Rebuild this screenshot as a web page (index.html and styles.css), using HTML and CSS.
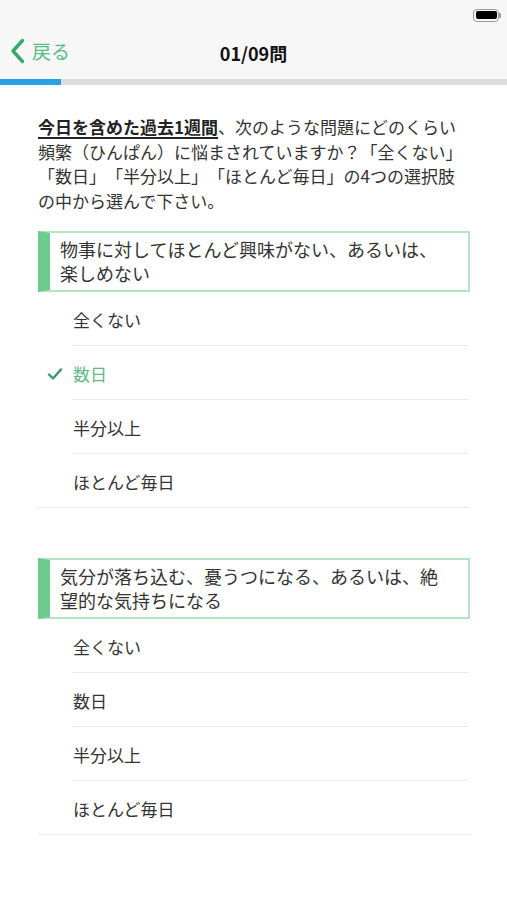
FILE: index.html
```html
<!DOCTYPE html>
<html lang="ja">
<head>
<meta charset="utf-8">
<title>01/09問</title>
<link rel="stylesheet" href="styles.css">
</head>
<body>
<div class="statusbar">
  <div class="battery"><div class="battery-level"></div></div>
  <div class="battery-nub"></div>
</div>
<header class="navbar">
  <a class="back">
    <svg class="chev" width="15" height="26" viewBox="0 0 15 26"><polyline points="12.5,2.5 3,13 12.5,23.5" fill="none" stroke="#3aa86b" stroke-width="3.4" stroke-linecap="round" stroke-linejoin="round"/></svg>
    <span>戻る</span>
  </a>
  <h1 class="title">01/09問</h1>
</header>
<div class="progress"><div class="progress-fill" style="width:61px"></div></div>

<main class="content">
  <p class="intro"><span class="em">今日を含めた過去1週間</span>、次のような問題にどのくらい頻繁（ひんぱん）に悩まされていますか？「全くない」「数日」「半分以上」「ほとんど毎日」の4つの選択肢の中から選んで下さい。</p>

  <section class="question">
    <div class="qbox"><p>物事に対してほとんど興味がない、あるいは、楽しめない</p></div>
    <ul class="options">
      <li class="opt"><span class="label">全くない</span></li>
      <li class="opt selected"><svg class="check" width="16" height="14" viewBox="0 0 16 14"><polyline points="2,7.5 6,11.5 14,2.5" fill="none" stroke="#3a9a66" stroke-width="2.4" stroke-linecap="round" stroke-linejoin="round"/></svg><span class="label">数日</span></li>
      <li class="opt"><span class="label">半分以上</span></li>
      <li class="opt last"><span class="label">ほとんど毎日</span></li>
    </ul>
  </section>

  <section class="question second">
    <div class="qbox"><p>気分が落ち込む、憂うつになる、あるいは、絶望的な気持ちになる</p></div>
    <ul class="options">
      <li class="opt"><span class="label">全くない</span></li>
      <li class="opt"><span class="label">数日</span></li>
      <li class="opt"><span class="label">半分以上</span></li>
      <li class="opt last"><span class="label">ほとんど毎日</span></li>
    </ul>
  </section>
</main>
</body>
</html>
```

FILE: styles.css
```css
* { box-sizing: border-box; }
html, body { margin: 0; padding: 0; background: #fff; }
body {
  font-family: "Noto Sans CJK JP", "Noto Sans", sans-serif;
  color: #333;
  width: 507px;
  text-spacing-trim: space-all;
}
.statusbar {
  height: 30px;
  background: #f7f7f7;
  display: flex;
  justify-content: flex-end;
  align-items: center;
  padding-right: 6px;
}
.battery {
  width: 26px;
  height: 13px;
  border: 1.5px solid #9a9a9a;
  border-radius: 4px;
  padding: 1.5px;
}
.battery-level { width: 100%; height: 100%; background: #000; border-radius: 2px; }
.battery-nub { width: 2px; height: 5px; background: #9a9a9a; border-radius: 0 1px 1px 0; }
.navbar {
  height: 49px;
  background: #f7f7f7;
  display: flex;
  align-items: center;
  justify-content: center;
  position: relative;
}
.back {
  position: absolute;
  left: 10px;
  top: 8px;
  display: flex;
  align-items: center;
  gap: 7px;
  color: #5dbb86;
  font-size: 19px;
  line-height: 26px;
}
.chev { display: block; }
.title {
  margin: 0;
  font-size: 18px;
  font-weight: 700;
  color: #111;
  line-height: 26px;
  position: relative;
  top: -2px;
}
.progress { height: 6px; background: #dddddd; }
.progress-fill { height: 100%; background: #2ba0e2; }
.content { padding: 30px 37px 0 38px; }
.intro {
  margin: 0;
  font-size: 17px;
  line-height: 24.5px;
  color: #333;
}
.em { font-weight: 700; text-decoration: underline; text-underline-offset: 3px; text-decoration-thickness: 1.5px; color: #222; }
.question { margin-top: 18px; }
.question.second { margin-top: 50px; }
.qbox {
  border: 2px solid #b3e5c2;
  border-left: 12px solid #6dcb8d;
  padding: 4px 20px 5px 10px;
}
.qbox p { margin: 0; font-size: 18px; line-height: 24px; color: #333; }
.options { list-style: none; margin: 0; padding: 0; }
.opt {
  height: 54px;
  display: flex;
  align-items: center;
  padding-left: 35px;
  padding-top: 2px;
  position: relative;
}
.opt::after {
  content: "";
  position: absolute;
  left: 35px;
  right: 2px;
  bottom: 0;
  height: 1px;
  background: #e9e9e9;
}
.opt.last::after { left: 0; right: 0; }
.label { font-size: 17px; line-height: 24px; color: #333; }
.selected .label { color: #5dbb86; }
.check { position: absolute; left: 9px; top: 21px; }
```
